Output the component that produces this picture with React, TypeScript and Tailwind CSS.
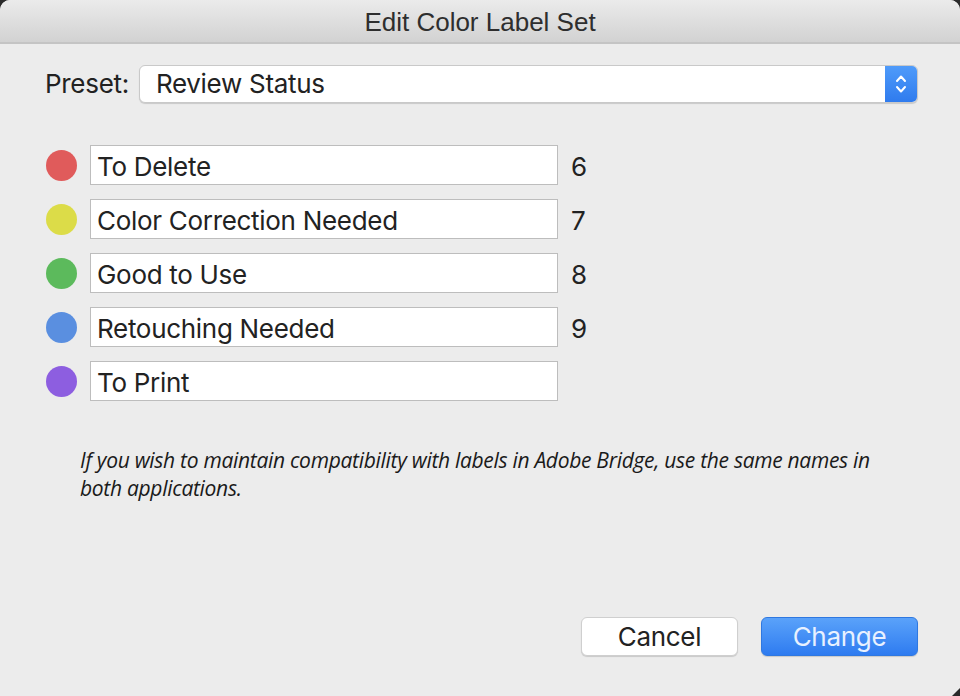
import React from "react";

const labels = [
  { color: "#e05b5b", text: "To Delete", num: "6" },
  { color: "#dcdc48", text: "Color Correction Needed", num: "7" },
  { color: "#5cba5c", text: "Good to Use", num: "8" },
  { color: "#5a8fe0", text: "Retouching Needed", num: "9" },
  { color: "#8d5ee0", text: "To Print", num: "" },
];

export default function App() {
  return (
    <div className="relative w-[960px] h-[696px] bg-[#2a2a2a] overflow-hidden" style={{ fontFamily: "Inter, 'Liberation Sans', sans-serif" }}>
      <div className="w-full h-full bg-[#ececec] rounded-t-[10px] flex flex-col">
        <div className="h-[44px] shrink-0 rounded-t-[10px] bg-gradient-to-b from-[#ebebeb] to-[#d2d2d2] border-b-2 border-[#c4c4c4] flex items-center justify-center">
          <span className="text-[26px] text-[#2e2e2e] mt-[2px]" style={{ fontFamily: "'Liberation Sans', sans-serif" }}>Edit Color Label Set</span>
        </div>
        <div className="flex items-center pl-[45px] pr-[42px] mt-[21px] tracking-[-0.3px]">
          <span className="text-[26px] text-[#222222] mr-[10px] leading-[30px]">Preset:</span>
          <div className="flex-1 h-[38px] bg-white rounded-[6px] border border-[#c9c9c9] shadow-[0_1px_1px_rgba(0,0,0,0.15)] flex items-center overflow-hidden">
            <span className="flex-1 pl-[16px] text-[26px] leading-[30px] text-[#222222]">Review Status</span>
            <div className="w-[32px] h-full bg-gradient-to-b from-[#4f9bfa] to-[#2f7bee] flex items-center justify-center">
              <svg width="14" height="24" viewBox="0 0 14 24" fill="none" stroke="white" strokeWidth="2" strokeLinecap="round" strokeLinejoin="round">
                <path d="M3 9 L7 4.5 L11 9" />
                <path d="M3 15 L7 19.5 L11 15" />
              </svg>
            </div>
          </div>
        </div>
        <div className="flex flex-col gap-[14px] pl-[46px] mt-[42px] tracking-[-0.3px]">
          {labels.map((l) => (
            <div key={l.text} className="flex items-center">
              <div className="w-[31px] h-[31px] rounded-full mr-[13px]" style={{ backgroundColor: l.color }} />
              <div className="w-[468px] h-[40px] bg-white border border-[#bdbdbd] flex items-center pl-[6px]">
                <span className="text-[26px] leading-[30px] text-[#222222] mt-[4px]">{l.text}</span>
              </div>
              <span className="ml-[13px] text-[26px] leading-[30px] text-[#222222] mt-[4px]">{l.num}</span>
            </div>
          ))}
        </div>
        <p className="mt-[45px] ml-[80px] w-[805px] text-[21px] italic leading-[28px] text-[#1a1a1a] tracking-[-0.3px]" style={{ fontFamily: "'Open Sans', sans-serif" }}>
          If you wish to maintain compatibility with labels in Adobe Bridge, use the same names in both applications.
        </p>
        <div className="flex-1" />
        <div className="flex justify-end gap-[23px] pr-[42px] pb-[40px] tracking-[-0.3px]">
          <button className="w-[157px] h-[39px] bg-white rounded-[6px] border border-[#cfcfcf] shadow-[0_1px_1px_rgba(0,0,0,0.15)] text-[26px] leading-[30px] text-[#222222]">Cancel</button>
          <button className="w-[157px] h-[39px] rounded-[6px] bg-gradient-to-b from-[#5aa2fa] to-[#2e7bf0] border border-[#2f78e0] shadow-[0_1px_1px_rgba(0,0,0,0.15)] text-[26px] leading-[30px] text-[#e8f1ff]">Change</button>
        </div>
      </div>
      <svg className="absolute right-0 bottom-0" width="8" height="8" viewBox="0 0 8 8">
        <path d="M8 0 L8 8 L0 8 Z" fill="#2a2a2a" />
      </svg>
    </div>
  );
}
